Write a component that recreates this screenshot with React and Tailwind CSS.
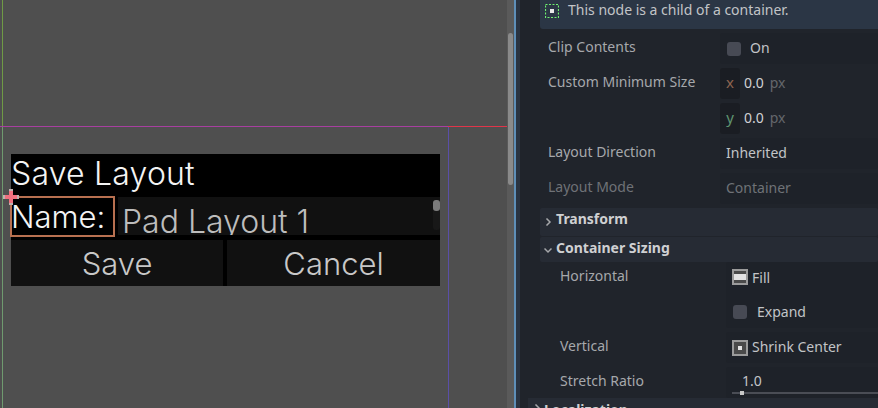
import React from 'react';

function Row({ label, indent, dim, children, className = 'h-[31px]' }) {
  return (
    <div className="flex items-start">
      <div className={`${indent ? 'w-[206px] pl-[40px]' : 'w-[200px] pl-[28px]'} shrink-0 h-[31px] flex items-center pb-[4px] ${dim ? 'text-[#6f7277]' : 'text-[#a6a8ab]'}`}>
        {label}
      </div>
      <div className={`flex-1 flex items-center rounded-[3px] bg-[#1e2229] ${className}`}>{children}</div>
    </div>
  );
}

function CheckBox() {
  return <span className="block w-[14px] h-[14px] rounded-[3px] bg-[#474a54]" />;
}

function SizeIcon({ fill }) {
  return (
    <svg width="16" height="16" viewBox="0 0 16 16" className="shrink-0">
      <rect x="0" y="0" width="16" height="16" fill="#9b9b9b" />
      <rect x="2" y="2" width="12" height="12" fill="#4a4a4a" />
      {fill ? <rect x="2" y="5" width="12" height="6" fill="#e2e2e2" /> : <rect x="6" y="6" width="4" height="4" fill="#e2e2e2" />}
    </svg>
  );
}

function Axis({ label, name, color }) {
  return (
    <div className="flex h-[31px] items-center">
      <div className="w-[200px] pl-[28px] pb-[4px] shrink-0 text-[#a6a8ab]">{label}</div>
      <span className={`w-[20px] h-[31px] flex items-center justify-center rounded-[3px] bg-[#1a1d23] text-[15px] pb-[3px] ${color}`}>{name}</span>
      <span className="ml-[4px] pb-[2px] text-[#d0d1d3]">0.0</span>
      <span className="ml-[6px] pb-[2px] text-[#64676c]">px</span>
    </div>
  );
}

function Chevron({ open }) {
  return (
    <svg width="8" height="8" viewBox="0 0 8 8" className="shrink-0" fill="none" stroke="#a6a8ab" strokeWidth="1.5">
      {open ? <path d="M0.5 2.5 L4 6 L7.5 2.5" /> : <path d="M2.5 0.5 L6 4 L2.5 7.5" />}
    </svg>
  );
}

function Section({ title, open, className, textClass }) {
  return (
    <div className={`flex items-center bg-[#262b34] rounded-[2px] font-bold text-[#cfd0d2] ${className}`}>
      <Chevron open={open} />
      <span className={`ml-[4px] whitespace-nowrap ${textClass}`}>{title}</span>
    </div>
  );
}

export default function App() {
  return (
    <div className="flex w-[878px] h-[408px] overflow-hidden bg-[#20242b] font-['Noto_Sans',sans-serif] text-[14px]">
      {/* viewport */}
      <div className="relative w-[514px] shrink-0 bg-[#4f4f4f] pt-[154px] pl-[11px]">
        <div className="absolute left-[2px] top-0 w-px h-[127px] bg-[#6f9a45]" />
        <div className="absolute left-[2px] top-[127px] w-px h-[281px] bg-[#6f9a6f]" />
        <div className="absolute left-0 top-[126px] w-[448px] h-px bg-[#a83fa0]" />
        <div className="absolute left-[448px] top-[126px] w-[66px] h-px bg-[#e0354a]" />
        <div className="absolute left-[448px] top-[127px] w-px h-[281px] bg-[#5a4fa8]" />

        {/* dialog */}
        <div className="w-[429px] h-[132px] bg-black flex flex-col font-['Inter',sans-serif] font-light">
          <div className="h-[43px] shrink-0 text-[32px] leading-[40px] tracking-[0.2px] text-[#f4f4f4] whitespace-nowrap">Save Layout</div>
          <div className="flex h-[38px] shrink-0">
            <div className="w-[104px] shrink-0 text-[31px] leading-[39px] text-[#f4f4f4]">Name:</div>
            <div className="relative flex-1 ml-[3px] h-[38px] bg-[#111111] pl-[4px] text-[32px] leading-[49px] text-[#bdbdbd] overflow-hidden whitespace-nowrap">
              Pad Layout 1
              <span className="absolute right-0 top-[3px] w-[7px] h-[30px] rounded-[3px] bg-[#181818]" />
              <span className="absolute right-0 top-[3px] w-[7px] h-[11px] rounded-[3px] bg-[#7a7a7a]" />
            </div>
          </div>
          <div className="flex gap-[4px] mt-[5px] h-[46px] shrink-0">
            <div className="w-[212px] flex items-center justify-center bg-[#111111] text-[31px] leading-none text-[#c8c8c8]">Save</div>
            <div className="flex-1 flex items-center justify-center bg-[#111111] text-[31px] leading-none text-[#c8c8c8]">Cancel</div>
          </div>
        </div>

        {/* selection box sits on top of the label */}
        <div className="absolute left-[10px] top-[196px] w-[105px] h-[41px] border-2 border-[#b87050]" />
        <div className="absolute left-[3px] top-[195px] w-[16px] h-[4px] bg-[#f0707f] border-x-2 border-[#c0b0b0]" />
        <div className="absolute left-[9px] top-[189px] w-[4px] h-[16px] bg-[#f0707f] border-y-2 border-[#c0b0b0]" />

        {/* scrollbar */}
        <div className="absolute right-0 top-0 w-[7px] h-full bg-[#5a5a5a]" />
        <div className="absolute right-[1px] top-[33px] w-[5px] h-[152px] rounded-[3px] bg-[#8a8a8a]" />
      </div>

      <div className="w-[2px] shrink-0 bg-[#5f8fb8]" />
      <div className="w-[4px] shrink-0 bg-[#2a3340]" />

      {/* inspector */}
      <div className="flex-1 overflow-hidden">
        <div className="h-[29px] ml-[20px] flex items-start bg-[#2b3645] rounded-bl-[3px] pl-[5px]">
          <svg width="14" height="14" viewBox="0 0 14 14" className="shrink-0 mt-[4px]">
            <rect x="0.5" y="0.5" width="13" height="13" fill="none" stroke="#6ff06f" strokeWidth="1.2" strokeDasharray="2 1.5" />
            <rect x="5" y="5" width="4" height="4" fill="#e8e8e8" />
          </svg>
          <span className="ml-[9px] leading-[20px] text-[#c2c4c7] whitespace-nowrap">This node is a child of a container.</span>
        </div>

        <div className="flex flex-col gap-[4px] mt-[4px]">
          <Row label="Clip Contents">
            <div className="ml-[7px]"><CheckBox /></div>
            <span className="ml-[9px] pb-[2px] text-[#c2c4c7]">On</span>
          </Row>
          <Axis label="Custom Minimum Size" name="x" color="text-[#8d6450]" />
          <Axis name="y" color="text-[#5f9470]" />
          <Row label="Layout Direction">
            <span className="ml-[6px] pb-[2px] text-[#c2c4c7]">Inherited</span>
          </Row>
          <Row label="Layout Mode" dim>
            <span className="ml-[6px] pb-[2px] text-[#6f7277]">Container</span>
          </Row>
          <Section title="Transform" className="ml-[20px] h-[28px] pl-[4px]" textClass="pb-[8px]" />
        </div>

        <Section title="Container Sizing" open className="ml-[20px] mt-px h-[25px] pl-[4px]" textClass="pb-[4px]" />

        <Row label="Horizontal" indent className="h-[66px] !items-start">
          <div className="flex flex-col">
            <div className="flex items-center h-[30px] ml-[6px]">
              <SizeIcon fill />
              <span className="ml-[4px] text-[#c2c4c7]">Fill</span>
            </div>
            <div className="flex items-center h-[35px] ml-[7px] pt-[4px]">
              <CheckBox />
              <span className="ml-[10px] text-[#c2c4c7]">Expand</span>
            </div>
          </div>
        </Row>
        <div className="flex flex-col gap-[4px] mt-[4px]">
          <Row label="Vertical" indent>
            <div className="ml-[6px]"><SizeIcon /></div>
            <span className="ml-[4px] pb-[2px] text-[#c2c4c7]">Shrink Center</span>
          </Row>
          <Row label="Stretch Ratio" indent className="h-[31px] relative">
            <span className="ml-[16px] pb-[4px] text-[#c2c4c7]">1.0</span>
            <span className="absolute left-[6px] right-0 top-[25px] h-[2px] bg-[#4a4d55]" />
            <span className="absolute left-[14px] top-[24px] w-[4px] h-[4px] bg-[#c8c8c8]" />
          </Row>
        </div>
        <div className="ml-[8px] h-[24px] flex items-start pt-[6px] pl-[5px] bg-[#262b34] font-bold text-[#cfd0d2]">
          <Chevron />
          <span className="ml-[3px] -mt-[5px] whitespace-nowrap">Localization</span>
        </div>
      </div>
    </div>
  );
}
